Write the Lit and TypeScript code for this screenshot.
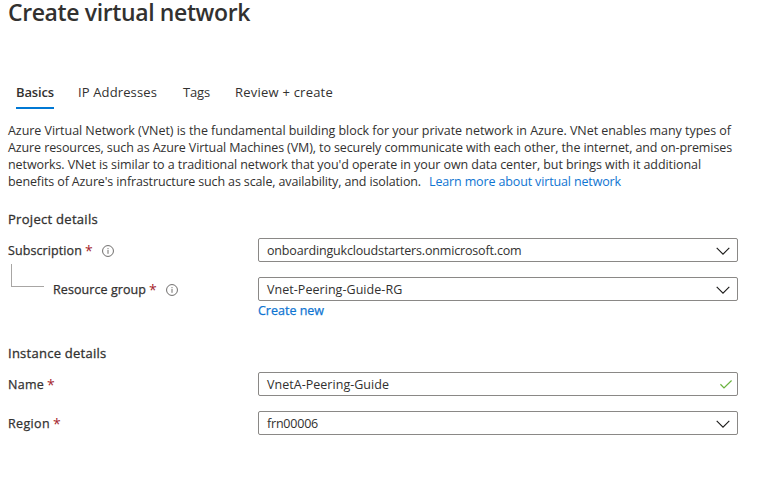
import { LitElement, html, css, svg, nothing } from "lit";
import { customElement, property } from "lit/decorators.js";

/** Single-line text tracked so that it fills the given advance width. */
@customElement("fit-text")
class FitText extends LitElement {
  static styles = css`
    :host { display: inline-block; white-space: pre; flex: none; }
    span { display: inline-block; }
  `;
  @property() text = "";
  @property({ type: Number }) width = 0;

  render() {
    return html`<span>${this.text}</span>`;
  }

  updated() {
    const span = this.renderRoot.querySelector("span") as HTMLElement;
    span.style.letterSpacing = "0px";
    const natural = span.getBoundingClientRect().width;
    span.style.letterSpacing = `${(this.width - natural) / this.text.length}px`;
  }
}

type Field = { label: string; labelWidth: number; value: string; valueWidth: number; info?: boolean; valid?: boolean; child?: boolean };

const tabs: [string, number][] = [["Basics", 38], ["IP Addresses", 79], ["Tags", 27], ["Review + create", 98]];

const intro: [string, number][] = [
  ["Azure Virtual Network (VNet) is the fundamental building block for your private network in Azure. VNet enables many types of", 723],
  ["Azure resources, such as Azure Virtual Machines (VM), to securely communicate with each other, the internet, and on-premises", 724],
  ["networks. VNet is similar to a traditional network that you'd operate in your own data center, but brings with it additional", 693],
  ["benefits of Azure's infrastructure such as scale, availability, and isolation.", 413],
];

const infoIcon = svg`<svg class="info" width="12" height="12" viewBox="0 0 12 12" fill="none" stroke="#605e5c">
  <circle cx="6" cy="6" r="5.45" stroke-width=".9"/><path stroke-width=".9" d="M6 5V8.8M6 3.1v1.1"/></svg>`;
const chevron = svg`<svg class="chevron" width="14" height="8" viewBox="0 0 14 8" fill="none" stroke="#1b1a19" stroke-width="1.1">
  <path d="M.7 .8L7 7.1L13.3 .8"/></svg>`;
const check = svg`<svg class="check" width="12" height="9" viewBox="0 0 12 9" fill="none" stroke="#6bb33f" stroke-width="1.3">
  <path d="M.4 4.3L4 7.9L11.6 .5"/></svg>`;

@customElement("app-root")
class AppRoot extends LitElement {
  static styles = css`
    :host {
      display: block; box-sizing: border-box; width: 765px; height: 481px;
      padding-left: 8px; background: #fff; color: #323130;
      font: 12.5px/17px "Open Sans", "Noto Sans", sans-serif;
    }
    h1, h2, p { margin: 0; font-weight: 400; }
    h1 { height: 80px; font-size: 23px; font-weight: 600; line-height: 24px; }
    .tabs { display: flex; gap: 24px; height: 29px; padding-left: 8px; font-size: 13px; line-height: 24px; }
    .tab.ip { margin-right: 2px; }
    .tab.review { margin-left: 1px; }
    .tab.active { font-weight: 600; border-bottom: 2px solid #0078d4; box-sizing: border-box; }
    .intro { display: flex; flex-direction: column; margin-top: 13px; }
    .line { display: flex; height: 17px; }
    .link { color: #0f75d2; }
    .learn { margin-left: 8px; }
    h2 { font-size: 13px; line-height: 20px; height: 20px; -webkit-text-stroke: .3px #323130; }
    .project { margin-top: 19px; }
    .instance { margin-top: 24px; }
    .field { display: flex; align-items: center; height: 24px; margin-top: 15px; }
    h2 + .field { margin-top: 9px; }
    .label { display: flex; align-items: center; width: 250px; height: 24px; }
    .name { -webkit-text-stroke: .25px #323130; }
    .child .name { margin-left: 9px; }
    .branch { width: 33px; height: 23px; margin: -27px 0 0 3px; box-sizing: border-box; border: solid #a8a6a4; border-width: 0 0 1px 1px; }
    .required { color: #a4262c; margin-left: 3px; width: 7px; font-size: 14px; }
    .info { margin-left: 10px; margin-top: 2px; }
    .control {
      display: flex; align-items: center; justify-content: space-between; box-sizing: border-box;
      width: 480px; height: 24px; padding: 0 8px; border: 1px solid #8a8886; border-radius: 2px;
    }
    .chevron { margin-right: -1px; margin-top: 1px; }
    .check { margin-right: -3px; }
    .create { height: 17px; margin: 1px 0 0 250px; display: flex; -webkit-text-stroke: .25px #0f75d2; }
  `;

  private field(f: Field) {
    return html`<div class="field ${f.child ? "child" : ""}">
      <div class="label">
        ${f.child ? html`<span class="branch"></span>` : nothing}
        <fit-text class="name" .text=${f.label} .width=${f.labelWidth}></fit-text>
        <span class="required">*</span>${f.info ? infoIcon : nothing}
      </div>
      <div class="control"><fit-text .text=${f.value} .width=${f.valueWidth}></fit-text>${f.valid ? check : chevron}</div>
    </div>`;
  }

  render() {
    return html`
      <h1><fit-text .text=${"Create virtual network"} .width=${242}></fit-text></h1>
      <nav class="tabs">
        ${tabs.map(([t, w], i) => html`<div class="tab ${["active", "ip", "", "review"][i]}"><fit-text .text=${t} .width=${w}></fit-text></div>`)}
      </nav>
      <p class="intro">
        ${intro.map(([t, w], i) => html`<span class="line"><fit-text .text=${t} .width=${w}></fit-text>${i === 3
          ? html`<fit-text class="link learn" .text=${"Learn more about virtual network"} .width=${192}></fit-text>` : nothing}</span>`)}
      </p>
      <h2 class="project"><fit-text .text=${"Project details"} .width=${90}></fit-text></h2>
      ${this.field({ label: "Subscription", labelWidth: 74, value: "onboardingukcloudstarters.onmicrosoft.com", valueWidth: 254.5, info: true })}
      ${this.field({ label: "Resource group", labelWidth: 93, value: "Vnet-Peering-Guide-RG", valueWidth: 135.3, info: true, child: true })}
      <div class="create link"><fit-text .text=${"Create new"} .width=${66}></fit-text></div>
      <h2 class="instance"><fit-text .text=${"Instance details"} .width=${98.5}></fit-text></h2>
      ${this.field({ label: "Name", labelWidth: 36, value: "VnetA-Peering-Guide", valueWidth: 122, valid: true })}
      ${this.field({ label: "Region", labelWidth: 42, value: "frn00006", valueWidth: 51 })}
    `;
  }
}
